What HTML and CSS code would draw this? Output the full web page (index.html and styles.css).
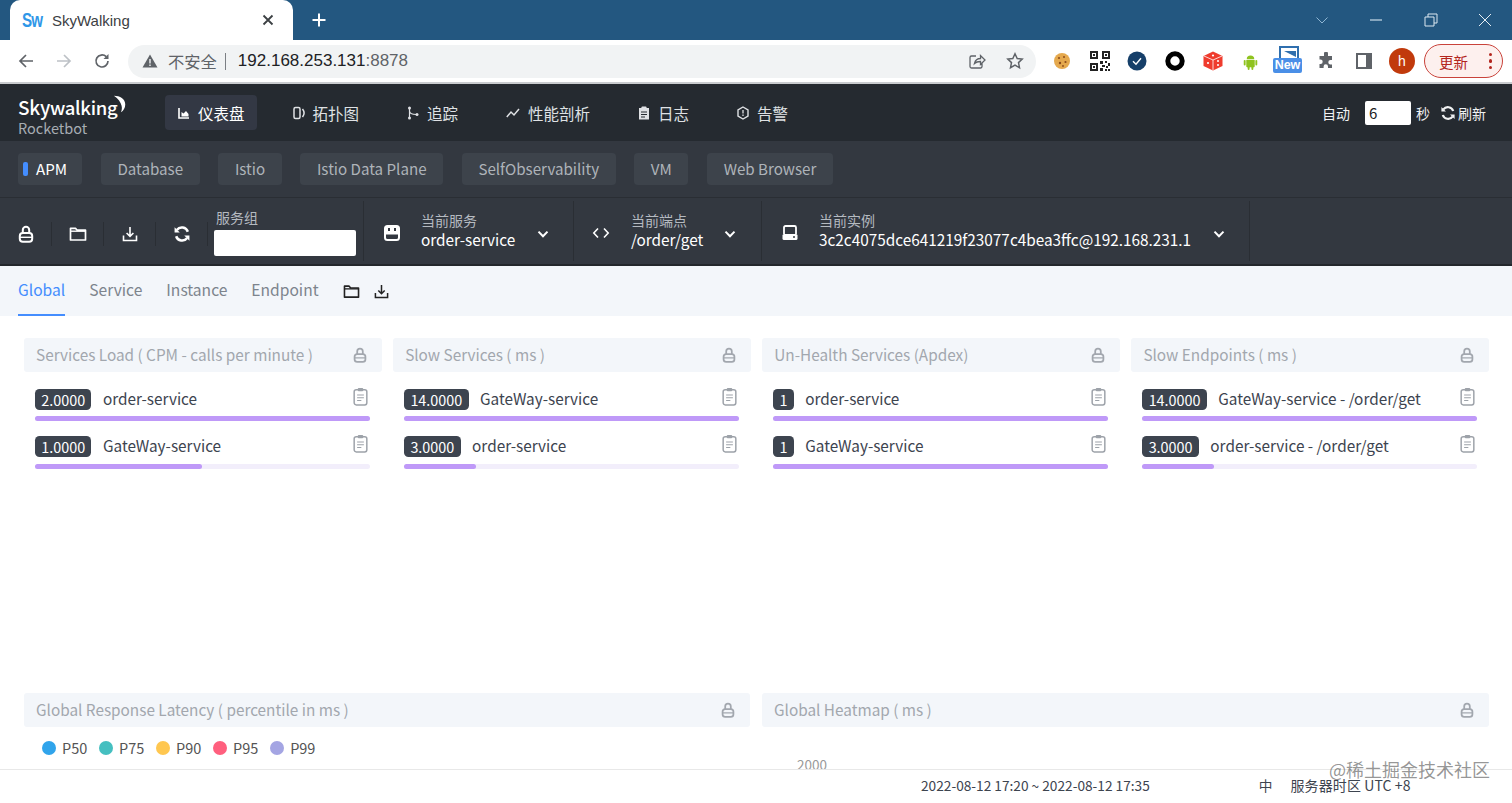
FILE: index.html
```html
<!DOCTYPE html>
<html lang="zh">
<head>
<meta charset="utf-8">
<title>SkyWalking</title>
<link rel="stylesheet" href="styles.css">
</head>
<body>
<svg class="defs" width="0" height="0" aria-hidden="true">
  <symbol id="lock" viewBox="0 0 16 18"><path d="M4.800 8.500V5a3.200 3.200 0 0 1 6.400 0v3.500" fill="none" stroke="currentColor" stroke-width="2"/><rect x="1.800" y="8" width="12.400" height="8.800" rx="3" fill="none" stroke="currentColor" stroke-width="2"/><rect x="2" y="11.600" width="12" height="1.400" fill="currentColor"/></symbol>
  <symbol id="folder" viewBox="0 0 18 16"><path d="M1.500 14V2.300h5l1.600 1.900h8.400V14z" fill="none" stroke="currentColor" stroke-width="1.700" stroke-linejoin="round"/><path d="M1.500 5.200h15" stroke="currentColor" stroke-width="1.400"/></symbol>
  <symbol id="download" viewBox="0 0 16 16"><path d="M8 1v9M4.600 7 8 10.400 11.400 7M1.500 9.500v5h13v-5" fill="none" stroke="currentColor" stroke-width="1.600"/></symbol>
  <symbol id="refresh" viewBox="0 0 16 16"><path d="M13.200 6A5.600 5.600 0 0 0 3.400 4.400M2.800 10a5.600 5.600 0 0 0 9.800 1.600" fill="none" stroke="currentColor" stroke-width="2.200"/><path d="M1.400 2v4.600H6zM14.600 14V9.400H10z" fill="currentColor"/></symbol>
  <symbol id="chev" viewBox="0 0 14 14"><path d="M2.500 4.600 7 9.200l4.500-4.600" fill="none" stroke="currentColor" stroke-width="2"/></symbol>
  <symbol id="clip" viewBox="0 0 14 18"><rect x="1" y="2.600" width="12" height="14.400" rx="2" fill="none" stroke="currentColor" stroke-width="1.400"/><rect x="4.400" y="1" width="5.200" height="3" rx="1" fill="currentColor"/><path d="M3.800 7.600h6.400M3.800 10.200h6.400M3.800 12.800h4" stroke="currentColor" stroke-width="1.100"/></symbol>
</svg>

<header class="tabstrip">
  <div class="tab">
    <span class="favicon">Sw</span>
    <span class="tab-title">SkyWalking</span>
    <svg class="tab-close" viewBox="0 0 12 12" width="12" height="12"><path d="M1.500 1.500l9 9M10.500 1.500l-9 9" stroke="#3c4043" stroke-width="1.800"/></svg>
  </div>
  <svg class="new-tab" viewBox="0 0 16 16" width="16" height="16"><path d="M8 1.500v13M1.500 8h13" stroke="#fff" stroke-width="2"/></svg>
  <div class="win-controls">
    <svg viewBox="0 0 14 14" width="14" height="14"><path d="M1.500 4.500 7 10l5.500-5.500" fill="none" stroke="#8fb6d3" stroke-width="1"/></svg>
    <svg viewBox="0 0 14 14" width="14" height="14"><path d="M1 7h12" stroke="#c9dbe8" stroke-width="1.200"/></svg>
    <svg viewBox="0 0 14 14" width="14" height="14"><path d="M1 4h9v9H1zM4 4V1h9v9h-3" fill="none" stroke="#dce8f0" stroke-width="1"/></svg>
    <svg viewBox="0 0 14 14" width="14" height="14"><path d="M1 1l12 12M13 1 1 13" stroke="#e6eef4" stroke-width="1"/></svg>
  </div>
</header>

<div class="toolbar">
  <svg class="tb-nav" viewBox="0 0 18 18" width="18" height="18"><path d="M16 9H3M9 3 3 9l6 6" fill="none" stroke="#5f6368" stroke-width="1.700"/></svg>
  <svg class="tb-nav" viewBox="0 0 18 18" width="18" height="18"><path d="M2 9h13M9 3l6 6-6 6" fill="none" stroke="#bdc1c6" stroke-width="1.700"/></svg>
  <svg class="tb-nav" viewBox="0 0 18 18" width="18" height="18"><path d="M15 9a6 6 0 1 1-1.800-4.300" fill="none" stroke="#5f6368" stroke-width="1.700"/><path d="M15.500 2v5h-5z" fill="#5f6368"/></svg>
  <div class="omnibox">
    <svg viewBox="0 0 16 14" width="16" height="14"><path d="M8 0.500 15.500 13.500H.5z" fill="#5f6368"/><path d="M8 5v4.500M8 10.500v1.500" stroke="#f1f3f4" stroke-width="1.400"/></svg>
    <span class="insecure">不安全</span>
    <span class="omni-sep"></span>
    <span class="url">192.168.253.131<span class="port">:8878</span></span>
    <span class="omni-end">
      <svg viewBox="0 0 18 18" width="18" height="18"><path d="M8 4H3.500A1.500 1.500 0 0 0 2 5.500v9A1.500 1.500 0 0 0 3.500 16h9a1.500 1.500 0 0 0 1.500-1.500V11M6.500 11.500c.8-3.500 3-5 6-5V3.500L17 8l-4.500 4.500v-3c-2.500 0-4.500.5-6 2z" fill="none" stroke="#5f6368" stroke-width="1.300"/></svg>
      <svg viewBox="0 0 18 18" width="18" height="18"><path d="M9 1.800l2.200 4.700 5 .6-3.700 3.500 1 5.100L9 13.200l-4.500 2.500 1-5.100L1.800 7.100l5-.6z" fill="none" stroke="#5f6368" stroke-width="1.500"/></svg>
    </span>
  </div>
  <div class="extensions">
    <span class="ext"><svg viewBox="0 0 18 18" width="18" height="18"><circle cx="9" cy="9" r="8" fill="#e5a94e"/><circle cx="6" cy="6" r="1.100" fill="#8a4b1c"/><circle cx="11" cy="5" r="1" fill="#8a4b1c"/><circle cx="12.500" cy="10" r="1.100" fill="#8a4b1c"/><circle cx="7" cy="11" r="1.200" fill="#8a4b1c"/><circle cx="10" cy="14" r=".9" fill="#8a4b1c"/></svg></span>
    <span class="ext"><svg viewBox="0 0 20 20" width="20" height="20"><path fill="#222" d="M0 0h8v8H0zM12 0h8v8h-8zM0 12h8v8H0z"/><path fill="#fff" d="M2 2h4v4H2zM14 2h4v4h-4zM2 14h4v4H2z"/><path fill="#222" d="M3 3h2v2H3zM15 3h2v2h-2zM3 15h2v2H3zM10 10h3v3h-3zM15 10h2v2h-2zM18 12h2v3h-2zM12 14h3v2h-3zM16 15h2v2h-2zM10 17h3v3h-3zM15 18h2v2h-2zM18 18h2v2h-2z"/></svg></span>
    <span class="ext"><svg viewBox="0 0 20 20" width="20" height="20"><circle cx="10" cy="10" r="9.500" fill="#163f69"/><path d="M6 10.200l3 3 5-6" fill="none" stroke="#fff" stroke-width="1.400"/></svg></span>
    <span class="ext"><svg viewBox="0 0 20 20" width="20" height="20"><circle cx="10" cy="10" r="7.200" fill="none" stroke="#000" stroke-width="5"/></svg></span>
    <span class="ext"><svg viewBox="0 0 20 20" width="20" height="20"><path d="M10 .5 19.500 5v10L10 19.500.5 15V5z" fill="#ef3b2d"/><path d="M10 9v10M1 5l9 4 9-4" stroke="#fff" stroke-width=".8" fill="none"/><circle cx="10" cy="4.500" r="1.100" fill="#fff"/><circle cx="5" cy="12" r="1.100" fill="#fff"/><circle cx="15" cy="10" r="1" fill="#fff"/><circle cx="15" cy="14" r="1" fill="#fff"/></svg></span>
    <span class="ext"><svg viewBox="0 0 16 18" width="15" height="17"><path d="M4 6.500a4 4 0 0 1 8 0zM3.500 7.300h9v6.700a1 1 0 0 1-1 1h-7a1 1 0 0 1-1-1z" fill="#8fc31f"/><rect x=".8" y="7.300" width="2" height="6" rx="1" fill="#8fc31f"/><rect x="13.200" y="7.300" width="2" height="6" rx="1" fill="#8fc31f"/><rect x="5" y="14" width="2" height="4" rx="1" fill="#8fc31f"/><rect x="9" y="14" width="2" height="4" rx="1" fill="#8fc31f"/></svg></span>
    <span class="ext ext-new"><svg viewBox="0 0 20 14" width="20" height="14"><path d="M1 12V1h18v11" fill="none" stroke="#2f6fae" stroke-width="2"/><path d="M5 5h12v6z" fill="#2f6fae"/></svg><span class="new-badge">New</span></span>
    <span class="ext"><svg viewBox="0 0 18 18" width="18" height="18"><path d="M7 1.500a2 2 0 0 1 4 0V4h4v4h-1.500a2.200 2.200 0 0 0 0 4.400H15V16h-4v-1.500a2.200 2.200 0 0 0-4.400 0V16H2.500v-4h1a2.200 2.200 0 0 0 0-4.400h-1V4H7z" fill="#5f6368"/></svg></span>
    <span class="ext"><svg viewBox="0 0 16 16" width="16" height="16"><path d="M1 1h14v14H1z" fill="none" stroke="#5f6368" stroke-width="2"/><path d="M10 1h5v14h-5z" fill="#5f6368"/></svg></span>
    <span class="avatar">h</span>
  </div>
  <div class="update"><span>更新</span><span class="dots"><i></i><i></i><i></i></span></div>
</div>

<nav class="topnav">
  <div class="logo">
    <span class="logo-main">Sky<span class="logo-rest">walking</span></span>
    <svg class="logo-moon" viewBox="0 0 16 20" width="14" height="20"><path d="M1 .5c7 0 13 3.500 13 10 0 4-2 7-5 9 1.200-2.500 1.500-5 .8-7.500C9 8 6 4 1 .5z" fill="#fff"/></svg>
    <span class="logo-sub">Rocketbot</span>
  </div>
  <div class="nav-items">
    <a class="nav-item active"><svg viewBox="0 0 12 12" width="12" height="12"><path d="M1 1v10h10" fill="none" stroke="currentColor" stroke-width="1.600"/><path d="M3.500 9.500V5l2 1.500L8 4l2.500 3v2.500z" fill="currentColor"/></svg>仪表盘</a>
    <a class="nav-item"><svg viewBox="0 0 12 14" width="12" height="14"><rect x="1" y="1.500" width="6" height="11" rx="1.500" fill="none" stroke="currentColor" stroke-width="1.500"/><path d="M9.500 3c2 2.500 2 5.500 0 8" fill="none" stroke="currentColor" stroke-width="1.500"/></svg>拓扑图</a>
    <a class="nav-item"><svg viewBox="0 0 12 14" width="12" height="14"><circle cx="2.500" cy="2" r="1.500" fill="currentColor"/><circle cx="2.500" cy="12" r="1.500" fill="currentColor"/><circle cx="10" cy="8.500" r="1.500" fill="currentColor"/><path d="M2.500 2v10M2.500 5c0 2.500 3 3.500 7 3.500" fill="none" stroke="currentColor" stroke-width="1.200"/></svg>追踪</a>
    <a class="nav-item"><svg viewBox="0 0 14 12" width="14" height="12"><path d="M.8 10 5 5l3 3 5-6" fill="none" stroke="currentColor" stroke-width="1.500"/></svg>性能剖析</a>
    <a class="nav-item"><svg viewBox="0 0 12 14" width="12" height="14"><path d="M1 2h10v11.500H1z" fill="currentColor"/><rect x="3.500" y=".5" width="5" height="3" rx=".8" fill="currentColor"/><path d="M3 6h6M3 8.500h6M3 11h4" stroke="#252a30" stroke-width="1"/></svg>日志</a>
    <a class="nav-item"><svg viewBox="0 0 12 14" width="12" height="14"><path d="M6 1l5 3v6l-5 3-5-3V4z" fill="none" stroke="currentColor" stroke-width="1.400"/><path d="M6 4v3.500M6 8.500v1.500" stroke="currentColor" stroke-width="1.300"/></svg>告警</a>
  </div>
  <div class="auto-refresh">
    <span>自动</span>
    <span class="interval">6</span>
    <span>秒</span>
    <span class="refresh-now"><svg viewBox="0 0 16 16" width="16" height="16"><use href="#refresh"/></svg>刷新</span>
  </div>
</nav>

<div class="layers">
  <a class="layer active"><i class="layer-dot"></i>APM</a>
  <a class="layer">Database</a>
  <a class="layer">Istio</a>
  <a class="layer">Istio Data Plane</a>
  <a class="layer">SelfObservability</a>
  <a class="layer">VM</a>
  <a class="layer">Web Browser</a>
</div>

<div class="selectors">
  <span class="tool"><svg width="16" height="18"><use href="#lock"/></svg></span>
  <span class="tool"><svg width="18" height="16"><use href="#folder"/></svg></span>
  <span class="tool"><svg width="16" height="16"><use href="#download"/></svg></span>
  <span class="tool"><svg width="18" height="18"><use href="#refresh"/></svg></span>
  <div class="group-box">
    <label class="group-label">服务组</label>
    <span class="group-input"></span>
  </div>
  <div class="sel sel-service">
    <svg class="sel-icon" viewBox="0 0 18 18" width="18" height="18"><path fill-rule="evenodd" fill="currentColor" d="M4.500 1h9A3.500 3.500 0 0 1 17 4.500v9a3.500 3.500 0 0 1-3.500 3.500h-9A3.500 3.500 0 0 1 1 13.500v-9A3.500 3.500 0 0 1 4.500 1zM3 10.500v3A1.500 1.500 0 0 0 4.500 15h9a1.500 1.500 0 0 0 1.500-1.500v-3zM5 4v3h2V4zM11 4v3h2V4z"/></svg>
    <div class="sel-text"><span class="sel-label">当前服务</span><span class="sel-value">order-service</span></div>
    <svg class="sel-chev" width="14" height="14"><use href="#chev"/></svg>
  </div>
  <div class="sel sel-endpoint">
    <svg class="sel-icon" viewBox="0 0 18 14" width="18" height="14"><path d="M6 2.500 1.800 7 6 11.500M12 2.500 16.200 7 12 11.500" fill="none" stroke="currentColor" stroke-width="1.600"/></svg>
    <div class="sel-text"><span class="sel-label">当前端点</span><span class="sel-value">/order/get</span></div>
    <svg class="sel-chev" width="14" height="14"><use href="#chev"/></svg>
  </div>
  <div class="sel sel-instance">
    <svg class="sel-icon" viewBox="0 0 18 18" width="18" height="18"><path d="M3 10V3.500A1.500 1.500 0 0 1 4.500 2h9A1.500 1.500 0 0 1 15 3.500V10" fill="none" stroke="currentColor" stroke-width="1.800"/><rect x="1.500" y="10" width="15" height="6" rx="1.500" fill="currentColor"/><circle cx="13" cy="13" r="1" fill="#333840"/></svg>
    <div class="sel-text"><span class="sel-label">当前实例</span><span class="sel-value">3c2c4075dce641219f23077c4bea3ffc@192.168.231.1</span></div>
    <svg class="sel-chev" width="14" height="14"><use href="#chev"/></svg>
  </div>
</div>

<div class="tabs">
  <a class="tabs-item active">Global</a>
  <a class="tabs-item">Service</a>
  <a class="tabs-item">Instance</a>
  <a class="tabs-item">Endpoint</a>
  <svg class="tabs-folder" width="17" height="15"><use href="#folder"/></svg>
  <svg class="tabs-download" width="15" height="15"><use href="#download"/></svg>
</div>

<main class="dash">
  <div class="row-top">
    <section class="card">
      <div class="card-head"><span>Services Load ( CPM - calls per minute )</span><svg width="14" height="16"><use href="#lock"/></svg></div>
      <div class="list">
        <div class="item"><div class="item-line"><b class="badge">2.0000</b><span class="item-name">order-service</span><svg class="clip" width="15" height="19"><use href="#clip"/></svg></div><div class="track"><div class="fill" style="width:100%"></div></div></div>
        <div class="item"><div class="item-line"><b class="badge">1.0000</b><span class="item-name">GateWay-service</span><svg class="clip" width="15" height="19"><use href="#clip"/></svg></div><div class="track"><div class="fill" style="width:50%"></div></div></div>
      </div>
    </section>
    <section class="card">
      <div class="card-head"><span>Slow Services ( ms )</span><svg width="14" height="16"><use href="#lock"/></svg></div>
      <div class="list">
        <div class="item"><div class="item-line"><b class="badge">14.0000</b><span class="item-name">GateWay-service</span><svg class="clip" width="15" height="19"><use href="#clip"/></svg></div><div class="track"><div class="fill" style="width:100%"></div></div></div>
        <div class="item"><div class="item-line"><b class="badge">3.0000</b><span class="item-name">order-service</span><svg class="clip" width="15" height="19"><use href="#clip"/></svg></div><div class="track"><div class="fill" style="width:21.400%"></div></div></div>
      </div>
    </section>
    <section class="card">
      <div class="card-head"><span>Un-Health Services (Apdex)</span><svg width="14" height="16"><use href="#lock"/></svg></div>
      <div class="list">
        <div class="item"><div class="item-line"><b class="badge">1</b><span class="item-name">order-service</span><svg class="clip" width="15" height="19"><use href="#clip"/></svg></div><div class="track"><div class="fill" style="width:100%"></div></div></div>
        <div class="item"><div class="item-line"><b class="badge">1</b><span class="item-name">GateWay-service</span><svg class="clip" width="15" height="19"><use href="#clip"/></svg></div><div class="track"><div class="fill" style="width:100%"></div></div></div>
      </div>
    </section>
    <section class="card">
      <div class="card-head"><span>Slow Endpoints ( ms )</span><svg width="14" height="16"><use href="#lock"/></svg></div>
      <div class="list">
        <div class="item"><div class="item-line"><b class="badge">14.0000</b><span class="item-name">GateWay-service - /order/get</span><svg class="clip" width="15" height="19"><use href="#clip"/></svg></div><div class="track"><div class="fill" style="width:100%"></div></div></div>
        <div class="item"><div class="item-line"><b class="badge">3.0000</b><span class="item-name">order-service - /order/get</span><svg class="clip" width="15" height="19"><use href="#clip"/></svg></div><div class="track"><div class="fill" style="width:21.400%"></div></div></div>
      </div>
    </section>
  </div>
  <div class="row-bottom">
    <section class="card">
      <div class="card-head"><span>Global Response Latency ( percentile in ms )</span><svg width="14" height="16"><use href="#lock"/></svg></div>
      <div class="legend">
        <span class="legend-item"><i class="dot d50"></i>P50</span>
        <span class="legend-item"><i class="dot d75"></i>P75</span>
        <span class="legend-item"><i class="dot d90"></i>P90</span>
        <span class="legend-item"><i class="dot d95"></i>P95</span>
        <span class="legend-item"><i class="dot d99"></i>P99</span>
      </div>
    </section>
    <section class="card">
      <div class="card-head"><span>Global Heatmap ( ms )</span><svg width="14" height="16"><use href="#lock"/></svg></div>
      <div class="axis-label">2000</div>
    </section>
  </div>
</main>

<footer class="statusbar">
  <span class="range">2022-08-12 17:20 ~ 2022-08-12 17:35</span>
  <span class="lang">中</span>
  <span class="tz">服务器时区 UTC +8</span>
</footer>
<div class="watermark">@稀土掘金技术社区</div>
</body>
</html>
```
FILE: styles.css
```css
* { box-sizing: border-box; }
html, body { margin: 0; height: 803px; overflow: hidden; }
body {
  position: relative;
  display: flex;
  flex-direction: column;
  background: #fff;
  font-family: "Noto Sans CJK SC", "Noto Sans", sans-serif;
  color: #3d444f;
}
.defs { position: absolute; }

/* browser chrome */
.tabstrip {
  height: 40px;
  flex: none;
  display: flex;
  align-items: flex-end;
  background: #235780;
}
.tab {
  width: 283px;
  height: 40px;
  margin-left: 10px;
  padding: 0 19px 0 12px;
  display: flex;
  align-items: center;
  background: #fff;
  border-radius: 10px 10px 0 0;
}
.favicon {
  width: 22px;
  font: 700 21px "Liberation Sans", sans-serif;
  letter-spacing: -1px;
  color: #2f97e8;
  transform: scaleX(.72);
  transform-origin: left center;
}
.tab-title {
  flex: 1;
  margin-left: 8px;
  font: 15px "Liberation Sans", sans-serif;
  color: #3c4043;
}
.new-tab { margin: 0 0 12px 18px; }
.win-controls {
  margin-left: auto;
  height: 40px;
  padding-right: 20px;
  display: flex;
  align-items: center;
  gap: 40.500px;
}
.toolbar {
  height: 44px;
  flex: none;
  padding: 0 9px 0 17px;
  display: flex;
  align-items: center;
  background: #fff;
  border-bottom: 2px solid #c9cbce;
}
.tb-nav { margin-right: 20px; }
.tb-nav:nth-of-type(3) { margin-right: 17px; }
.omnibox {
  width: 908px;
  height: 33px;
  padding: 0 12px 0 14px;
  display: flex;
  align-items: center;
  background: #f1f3f4;
  border-radius: 17px;
  font: 17px "Liberation Sans", "Noto Sans CJK SC", sans-serif;
}
.insecure { margin-left: 10px; color: #5f6368; font-family: "Noto Sans CJK SC", sans-serif; font-size: 16.300px; }
.omni-sep { width: 1px; height: 17px; margin: 0 12px 0 8px; background: #7b7f84; }
.url { color: #202124; }
.port { color: #5f6368; }
.omni-end { margin-left: auto; display: flex; gap: 20px; }
.extensions { margin-left: 7px; display: flex; align-items: center; }
.ext { width: 37.800px; height: 30px; display: flex; align-items: center; justify-content: center; position: relative; }
.ext-new { align-items: flex-start; }
.new-badge {
  position: absolute;
  left: 3px;
  top: 12px;
  padding: 0 2px;
  background: #4a8fe7;
  color: #fff;
  font: 700 12.500px/15px "Liberation Sans", sans-serif;
  border-radius: 2px;
}
.avatar {
  width: 26px;
  height: 26px;
  margin-left: 6px;
  display: flex;
  align-items: center;
  justify-content: center;
  background: #c13a0c;
  color: #fff;
  border-radius: 50%;
  font: 14px "Liberation Sans", sans-serif;
}
.update {
  width: 79px;
  height: 34px;
  margin-left: 9px;
  padding: 0 10px 0 14px;
  display: flex;
  align-items: center;
  justify-content: space-between;
  border: 1.500px solid #c9423a;
  border-radius: 17px;
  background: #fdf0ee;
  color: #b3261e;
  font-size: 14.500px;
}
.dots { display: flex; flex-direction: column; gap: 3px; }
.dots i { width: 3.500px; height: 3.500px; border-radius: 50%; background: #b3261e; }

/* app top nav */
.topnav {
  height: 57px;
  flex: none;
  padding: 0 26px 0 18px;
  display: flex;
  align-items: center;
  background: #252a30;
  color: #dfe1e4;
  font-size: 15.500px;
}
.logo { position: relative; width: 147px; height: 44px; flex: none; }
.logo-main { display: block; font-size: 19px; font-weight: 500; line-height: 20px; margin-top: 6px; color: #fff; letter-spacing: -.3px; }
.logo-rest { font-size: 18.500px; }
.logo-moon { position: absolute; left: 95px; top: 3px; }
.logo-sub { display: block; font-size: 14.500px; line-height: 14px; margin-top: 4px; color: #a7adb3; }
.nav-items { display: flex; align-items: center; gap: 23px; }
.nav-item {
  height: 35px;
  padding: 0 12px 0 13px;
  display: flex;
  align-items: center;
  gap: 8px;
  border-radius: 4px;
}
.nav-item.active { background: #333844; color: #fff; }
.auto-refresh { margin-left: auto; display: flex; align-items: center; font-size: 14px; color: #f1f2f3; }
.interval {
  width: 46px;
  height: 24px;
  margin: 0 5px 0 15px;
  padding-left: 4px;
  background: #fff;
  color: #222;
  font-size: 15px;
  line-height: 24px;
  border-radius: 2px;
}
.refresh-now { margin-left: 10px; display: flex; align-items: center; gap: 2px; }

/* layers */
.layers {
  height: 57px;
  flex: none;
  padding: 12px 18px;
  display: flex;
  gap: 18.800px;
  background: #333840;
  border-bottom: 1px solid #2a2e34;
}
.layer {
  height: 32px;
  padding: 0 16.500px 2px;
  display: flex;
  align-items: center;
  background: #3d434b;
  border-radius: 4px;
  color: #aeb3b9;
  font-size: 15.150px;
  line-height: 30px;
}
.layer.active { padding: 0 15px 2px 5px; color: #fff; }
.layer-dot { width: 5px; height: 14px; margin: 2px 8px 0 0; border-radius: 2px; background: #448dfe; }

/* selectors */
.selectors {
  height: 68px;
  flex: none;
  display: flex;
  align-items: center;
  background: #333840;
  color: #fff;
  border-bottom: 2px solid #23272c;
}
.tool {
  width: 52px;
  height: 24px;
  margin-top: 6px;
  display: flex;
  align-items: center;
  justify-content: center;
  border-right: 1px solid #2a2e34;
}
.group-box {
  width: 156px;
  height: 60px;
  padding: 7px 0 0 6px;
  border-right: 1px solid #2a2e34;
}
.group-label { display: block; font-size: 14px; line-height: 18px; margin-left: 2px; color: #b5bac0; }
.group-input { display: block; width: 142px; height: 26px; margin-top: 4px; background: #fff; border-radius: 2px; }
.sel {
  height: 60px;
  display: flex;
  align-items: center;
  border-right: 1px solid #2a2e34;
}
.sel-icon { flex: none; margin: 3px 20px 0 19px; }
.sel-text { display: flex; flex-direction: column; }
.sel-label { font-size: 14px; line-height: 16px; color: #b5bac0; }
.sel-value { font-size: 15.350px; line-height: 22px; color: #fff; white-space: nowrap; }
.sel-chev { flex: none; margin: 6px 0 0 21px; }
.sel-service { width: 210px; }
.sel-endpoint { width: 188px; }
.sel-endpoint .sel-icon { margin-left: 18px; margin-right: 21px; }
.sel-endpoint .sel-chev { margin-left: 20px; }
.sel-instance { width: 488px; }

/* dashboard tabs */
.tabs {
  height: 50px;
  flex: none;
  padding-left: 18px;
  display: flex;
  align-items: stretch;
  gap: 24px;
  background: #f3f6fa;
  font-size: 15.600px;
  color: #7d848d;
}
.tabs-item { line-height: 47px; border-bottom: 2px solid transparent; }
.tabs-item.active { color: #448dfe; border-bottom-color: #448dfe; }
.tabs-folder { align-self: center; margin-top: 1px; color: #222; }
.tabs-download { align-self: center; margin-left: -9.500px; margin-top: 1px; color: #222; }

/* dashboard */
.dash { flex: 1; min-height: 0; padding: 22px 23px 0 24px; overflow: hidden; }
.row-top { height: 355px; display: grid; grid-template-columns: repeat(4, 1fr); gap: 11.500px; }
.row-bottom { display: grid; grid-template-columns: 726px 1fr; gap: 12px; }
.card-head {
  height: 34px;
  padding: 0 15px 0 12px;
  display: flex;
  align-items: center;
  justify-content: space-between;
  background: #f3f6fa;
  border-radius: 3px;
  color: #a2a7ae;
  font-size: 15.330px;
}
.card-head span { padding-bottom: 2px; }
.list { padding: 0 12px 0 11px; }
.item { padding-top: 16px; height: 47px; }
.item-line { height: 22px; display: flex; align-items: center; }
.badge {
  height: 21px;
  padding: 0 6.250px;
  background: #3d444f;
  border-radius: 4.500px;
  color: #fff;
  font-weight: 400;
  font-size: 14.400px;
  line-height: 21px;
}
.item-name { margin-left: 11.500px; padding-bottom: 2px; color: #3d444f; font-size: 15.330px; }
.clip { margin-left: auto; margin-right: 2px; margin-top: -6px; color: #9da2a9; }
.track { height: 4.500px; margin-top: 6px; background: #f2eefb; border-radius: 3px; }
.item + .item .track { margin-top: 7px; }
.fill { height: 100%; background: #bf99f8; border-radius: 3px; }
.legend { padding: 10px 0 0 18px; display: flex; gap: 11.750px; }
.legend-item { display: flex; align-items: center; gap: 6px; font-size: 14.500px; color: #555; line-height: 22px; }
.dot { width: 14px; height: 14px; border-radius: 50%; }
.d50 { background: #30a4eb; }
.d75 { background: #45bfc0; }
.d90 { background: #ffc750; }
.d95 { background: #ff5f7e; }
.d99 { background: #a4a5e3; }
.axis-label { margin: 29px 0 0 35px; font-size: 13.500px; color: #999; line-height: 16px; }

/* status bar */
.statusbar {
  position: absolute;
  left: 0;
  right: 0;
  top: 769px;
  height: 34px;
  display: flex;
  align-items: center;
  background: #fff;
  border-top: 1px solid #e8e8e8;
  font-size: 13.700px;
  color: #3d444f;
  padding-bottom: 3px;
}
.range { margin-left: 921px; }
.lang { margin-left: 109px; }
.tz { margin-left: 18px; font-size: 14px; letter-spacing: .1px; }
.watermark {
  position: absolute;
  left: 1329px;
  top: 756px;
  font-size: 18px;
  line-height: 26px;
  color: rgba(60, 60, 60, .55);
  white-space: nowrap;
}
```
